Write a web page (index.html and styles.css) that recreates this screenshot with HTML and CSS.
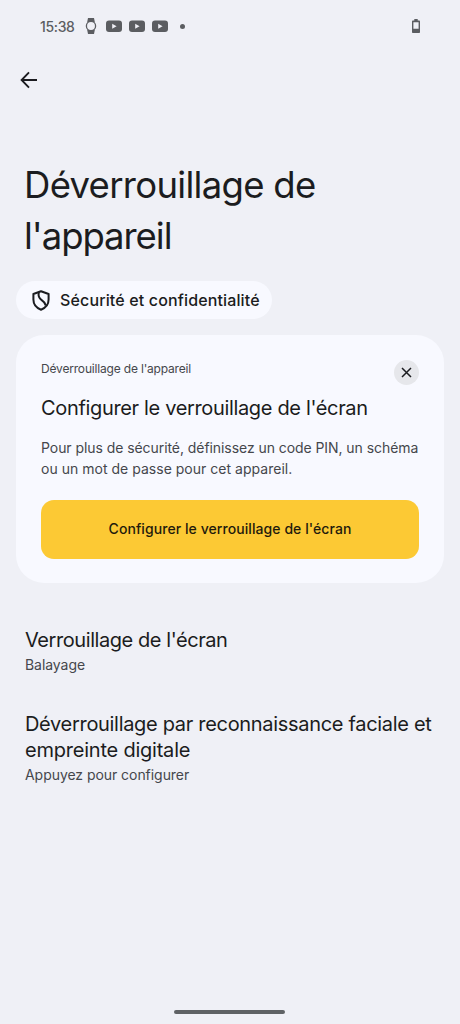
FILE: index.html
```html
<!DOCTYPE html>
<html lang="fr">
<head>
<meta charset="utf-8">
<title>Déverrouillage de l'appareil</title>
<link rel="stylesheet" href="styles.css">
</head>
<body>
<div class="screen">
  <header class="status">
    <span class="clock">15:38</span>
    <svg class="watch" width="12" height="16" viewBox="0 0 12 16"><path d="M3 0h6l.8 4H2.200zM3 16h6l.8-4H2.200z" fill="#5b5d61"/><circle cx="6" cy="8" r="4.600" fill="#eff0f6" stroke="#5b5d61" stroke-width="1.300"/></svg>
    <svg class="video" width="16" height="12" viewBox="0 0 16 12"><rect y=".5" width="16" height="11.500" rx="3" fill="#5b5d61"/><path d="M6.200 3.800v5l4.400-2.500z" fill="#eff0f6"/></svg>
    <svg class="video" width="16" height="12" viewBox="0 0 16 12"><rect y=".5" width="16" height="11.500" rx="3" fill="#5b5d61"/><path d="M6.200 3.800v5l4.400-2.500z" fill="#eff0f6"/></svg>
    <svg class="video" width="16" height="12" viewBox="0 0 16 12"><rect y=".5" width="16" height="11.500" rx="3" fill="#5b5d61"/><path d="M6.200 3.800v5l4.400-2.500z" fill="#eff0f6"/></svg>
    <span class="dot"></span>
    <svg class="battery" width="8" height="14" viewBox="0 0 8 14"><path d="M2.300 0h3.400v1.600H7.200a.8.8 0 0 1 .8.8v10.800a.8.8 0 0 1-.8.8H.8a.8.8 0 0 1-.8-.8V2.400a.8.8 0 0 1 .8-.8h1.500zM1.400 3.200v6.600h5.200V3.200z" fill="#5b5d61" fill-rule="evenodd"/></svg>
  </header>
  <nav class="toolbar">
    <svg width="18" height="18" viewBox="0 0 18 18" fill="none" stroke="#1b1b1f" stroke-width="1.900"><path d="M17 9H2M9 1.300 1.600 9 9 16.700"/></svg>
  </nav>
  <h1 class="title"><span class="t1">Déverrouillage de</span><br><span class="t2">l'appareil</span></h1>
  <div class="chip">
    <svg width="18" height="21" viewBox="0 0 18 21" fill="none" stroke="#1b1c20" stroke-width="2" stroke-linejoin="round"><path d="M9 1.200 16.600 4v5.600c0 4.600-3 8.400-7.600 10.100C4.400 18 1.400 14.200 1.400 9.600V4z"/><path d="M6.800 2.200C5.900 6.600 7 8.300 9.700 10.100c2.500 1.700 3.700 3 4.100 5.400"/></svg>
    <span class="chip-label">Sécurité et confidentialité</span>
  </div>
  <section class="card">
    <div class="card-top">
      <span class="eyebrow">Déverrouillage de l'appareil</span>
      <span class="close"><svg width="11" height="11" viewBox="0 0 11 11" stroke="#1b1c20" stroke-width="1.500"><path d="m1 1 9 9M10 1 1 10"/></svg></span>
    </div>
    <h2 class="card-title">Configurer le verrouillage de l'écran</h2>
    <p class="card-text"><span class="p1">Pour plus de sécurité, définissez un code PIN, un schéma</span><br><span class="p2">ou un mot de passe pour cet appareil.</span></p>
    <div class="button"><span>Configurer le verrouillage de l'écran</span></div>
  </section>
  <section class="item">
    <h3 class="item-title i0">Verrouillage de l'écran</h3>
    <p class="item-sub">Balayage</p>
  </section>
  <section class="item second">
    <h3 class="item-title"><span class="i1">Déverrouillage par reconnaissance faciale et</span><br><span class="i2">empreinte digitale</span></h3>
    <p class="item-sub">Appuyez pour configurer</p>
  </section>
  <div class="handle"></div>
</div>
</body>
</html>
```
FILE: styles.css
```css
* { box-sizing: border-box; margin: 0; padding: 0; }
body { background: #eff0f6; font-family: Inter, Roboto, sans-serif; color: #1b1c20; }
svg { display: block; flex: none; }
.screen { width: 460px; height: 1024px; display: flex; flex-direction: column; white-space: nowrap; overflow: hidden; }
.status { height: 52px; display: flex; align-items: center; padding: 0 40px; color: #5b5d61; }
.clock { width: 45px; font-size: 14px; font-weight: 500; letter-spacing: -0.35px; }
.watch { margin-right: 9px; }
.video { margin-right: 7px; }
.dot { width: 5px; height: 5px; border-radius: 50%; background: #5b5d61; margin-left: 5px; }
.battery { margin-left: auto; }
.toolbar { height: 56px; display: flex; align-items: center; padding-left: 20px; }
.title { margin: 52px 0 0 24px; font-size: 36.5px; line-height: 51px; font-weight: 400; }
.t1 { letter-spacing: -0.7px; }
.t2 { letter-spacing: -1.05px; }
.chip { display: flex; align-items: center; gap: 10px; width: 256px; height: 38px; margin: 19px 0 0 16px; padding-left: 16px; border-radius: 19px; background: #f8f9ff; font-size: 16px; font-weight: 500; letter-spacing: 0.14px; }
.card { width: 428px; height: 248px; margin: 16px 0 0 16px; padding: 25px; border-radius: 28px; background: #f8f9ff; }
.card-top { display: flex; justify-content: space-between; height: 25px; }
.eyebrow { font-size: 12px; line-height: 18px; letter-spacing: -0.18px; color: #45474c; }
.close { width: 25px; height: 25px; border-radius: 50%; background: #e6e7eb; display: flex; align-items: center; justify-content: center; }
.card-title { margin-top: 10px; font-size: 20px; line-height: 26px; font-weight: 400; letter-spacing: -0.34px; }
.card-text { margin-top: 17px; font-size: 14px; line-height: 20.5px; color: #45474c; }
.p1 { letter-spacing: -0.065px; }
.p2 { letter-spacing: 0.02px; }
.button { display: flex; align-items: center; justify-content: center; height: 59px; margin-top: 21px; padding-bottom: 2px; border-radius: 13px; background: #fcc934; font-size: 14px; font-weight: 500; letter-spacing: 0.07px; color: #1f1b0c; }
.item { margin: 44px 0 0 25px; }
.item.second { margin-top: 36px; }
.item-title { font-size: 20px; line-height: 26px; font-weight: 400; }
.i0 { letter-spacing: -0.43px; }
.i1 { letter-spacing: -0.31px; }
.i2 { letter-spacing: -0.22px; }
.item-sub { font-size: 14px; line-height: 20px; margin-top: 2px; letter-spacing: -0.05px; color: #45474c; }
.handle { width: 111px; height: 4px; border-radius: 2px; background: #5f6265; margin: auto auto 10px 174px; }
```
